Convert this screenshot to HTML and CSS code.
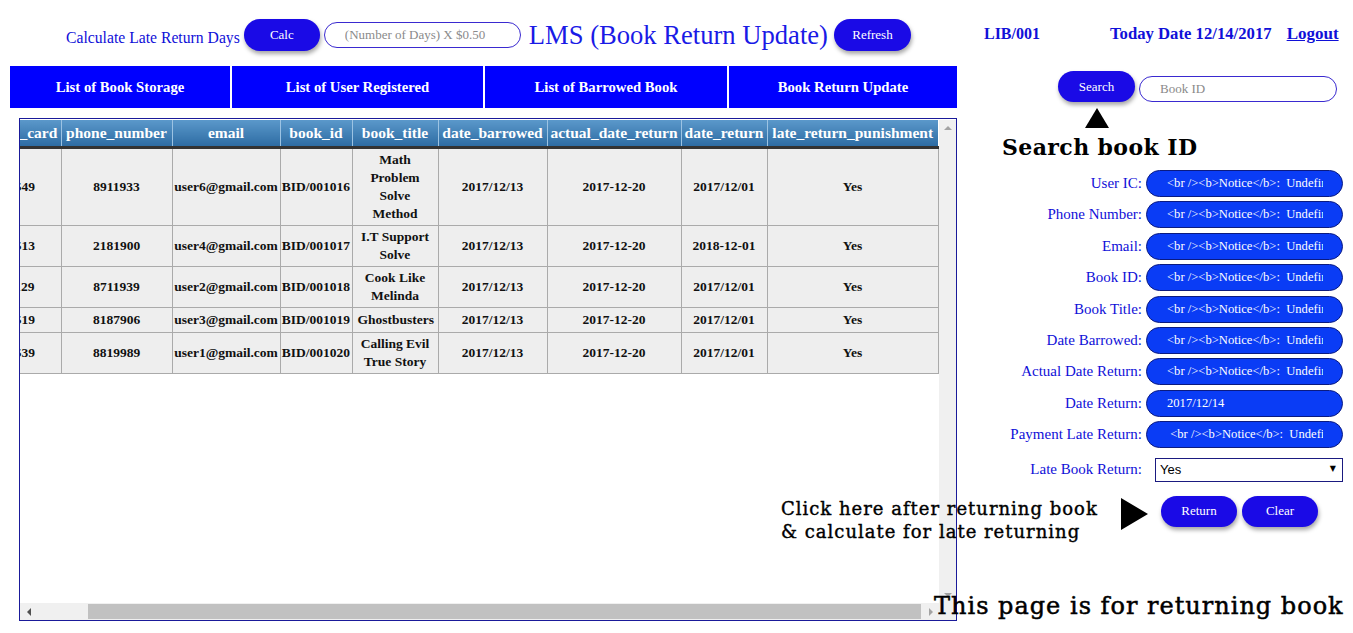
FILE: index.html
```html
<!DOCTYPE html>
<html>
<head>
<meta charset="utf-8">
<title>LMS (Book Return Update)</title>
<link rel="stylesheet" href="styles.css">
</head>
<body>
<header class="topbar">
  <span class="calc-label">Calculate Late Return Days</span>
  <button class="btn btn-calc">Calc</button>
  <input class="calc-input" type="text" placeholder="(Number of Days) X $0.50">
  <h1 class="title">LMS (Book Return Update)</h1>
  <button class="btn btn-refresh">Refresh</button>
  <span class="lib">LIB/001</span>
  <span class="today">Today Date 12/14/2017</span>
  <a class="logout" href="#">Logout</a>
</header>

<div class="main">
  <div class="left">
    <nav class="nav">
      <a href="#">List of Book Storage</a>
      <a href="#">List of User Registered</a>
      <a href="#">List of Barrowed Book</a>
      <a href="#">Book Return Update</a>
    </nav>
    <div class="table-wrap">
      <div class="viewport" id="viewport">
        <table class="data">
          <colgroup>
            <col class="c-ic"><col class="c-phone"><col class="c-email"><col class="c-bid"><col class="c-title"><col class="c-db"><col class="c-adr"><col class="c-dr"><col class="c-late">
          </colgroup>
          <thead>
            <tr>
              <th>user_ic_card</th><th>phone_number</th><th>email</th><th>book_id</th><th>book_title</th><th>date_barrowed</th><th>actual_date_return</th><th>date_return</th><th>late_return_punishment</th>
            </tr>
          </thead>
          <tbody>
            <tr><td>121549</td><td>8911933</td><td>user6@gmail.com</td><td>BID/001016</td><td class="wrap">Math Problem Solve Method</td><td>2017/12/13</td><td>2017-12-20</td><td>2017/12/01</td><td>Yes</td></tr>
            <tr><td>121513</td><td>2181900</td><td>user4@gmail.com</td><td>BID/001017</td><td class="wrap">I.T Support Solve</td><td>2017/12/13</td><td>2017-12-20</td><td>2018-12-01</td><td>Yes</td></tr>
            <tr><td>121129</td><td>8711939</td><td>user2@gmail.com</td><td>BID/001018</td><td class="wrap">Cook Like Melinda</td><td>2017/12/13</td><td>2017-12-20</td><td>2017/12/01</td><td>Yes</td></tr>
            <tr><td>121519</td><td>8187906</td><td>user3@gmail.com</td><td>BID/001019</td><td class="wrap">Ghostbusters</td><td>2017/12/13</td><td>2017-12-20</td><td>2017/12/01</td><td>Yes</td></tr>
            <tr><td>121539</td><td>8819989</td><td>user1@gmail.com</td><td>BID/001020</td><td class="wrap">Calling Evil True Story</td><td>2017/12/13</td><td>2017-12-20</td><td>2017/12/01</td><td>Yes</td></tr>
          </tbody>
        </table>
      </div>
      <div class="vbar">
        <span class="arrow arrow-up"></span>
        <span class="arrow arrow-down"></span>
      </div>
      <div class="hbar">
        <span class="hbtn"><span class="arrow arrow-left"></span></span>
        <span class="htrack"><span class="hthumb"></span></span>
        <span class="hbtn"><span class="arrow arrow-right"></span></span>
      </div>
      <div class="corner"></div>
    </div>
  </div>

  <aside class="right">
    <div class="search-row">
      <button class="btn btn-search">Search</button>
      <input class="search-input" type="text" placeholder="Book ID">
    </div>
    <div class="tri-up"></div>
    <div class="search-note">Search book ID</div>

    <form class="form">
      <label>User IC:</label><input class="pill" type="text" value="&lt;br /&gt;&lt;b&gt;Notice&lt;/b&gt;:  Undefined index: ic_card">
      <label>Phone Number:</label><input class="pill" type="text" value="&lt;br /&gt;&lt;b&gt;Notice&lt;/b&gt;:  Undefined index: phone_number">
      <label>Email:</label><input class="pill" type="text" value="&lt;br /&gt;&lt;b&gt;Notice&lt;/b&gt;:  Undefined index: email">
      <label>Book ID:</label><input class="pill" type="text" value="&lt;br /&gt;&lt;b&gt;Notice&lt;/b&gt;:  Undefined index: book_id">
      <label>Book Title:</label><input class="pill" type="text" value="&lt;br /&gt;&lt;b&gt;Notice&lt;/b&gt;:  Undefined index: book_title">
      <label>Date Barrowed:</label><input class="pill" type="text" value="&lt;br /&gt;&lt;b&gt;Notice&lt;/b&gt;:  Undefined index: date_barrowed">
      <label>Actual Date Return:</label><input class="pill" type="text" value="&lt;br /&gt;&lt;b&gt;Notice&lt;/b&gt;:  Undefined index: actual_date_return">
      <label>Date Return:</label><input class="pill" type="text" value="2017/12/14">
      <label>Payment Late Return:</label><input class="pill" type="text" value=" &lt;br /&gt;&lt;b&gt;Notice&lt;/b&gt;:  Undefined variable">
      <label class="sel-label">Late Book Return:</label>
      <div class="select-box">
        <select><option>Yes</option><option>No</option></select>
      </div>
    </form>

    <div class="action-row">
      <button class="btn btn-return">Return</button>
      <button class="btn btn-clear">Clear</button>
    </div>
  </aside>
</div>

<div class="note-click">Click here after returning book<br>&amp; calculate for late returning</div>
<div class="tri-right"></div>
<div class="note-page">This page is for returning book</div>

<script src="script.js"></script>
</body>
</html>
```

FILE: styles.css
```css
* { box-sizing: border-box; }

body {
  margin: 0;
  width: 1353px;
  height: 633px;
  overflow: hidden;
  position: relative;
  font-family: "Liberation Serif", "Times New Roman", serif;
  background: #ffffff;
  color: #1010d8;
}

/* ---------- top bar ---------- */
.topbar {
  display: flex;
  align-items: center;
  height: 32px;
  margin-top: 19px;
  padding-left: 66px;
}
.calc-label {
  font-size: 15.7px;
  color: #1010d8;
  padding-top: 5px;
}
.btn {
  width: 76px;
  height: 32px;
  border: none;
  border-radius: 16px;
  background: #1a0ae6;
  color: #ffffff;
  font-family: "Liberation Serif", serif;
  font-size: 13px;
  box-shadow: 1px 3px 4px rgba(0, 0, 0, 0.35);
  padding: 0;
}
.btn-calc { margin-left: 4px; }
.calc-input {
  margin-left: 4px;
  width: 197px;
  height: 26px;
  border: 1px solid #3a2ad0;
  border-radius: 13px;
  padding-left: 20px;
  font-family: "Liberation Serif", serif;
  font-size: 13px;
  outline: none;
}
.calc-input::placeholder, .search-input::placeholder { color: #8a8a8a; }
.title {
  margin: 0 0 0 8px;
  font-size: 26.6px;
  font-weight: normal;
  color: #1a1ae6;
  line-height: 32px;
}
.btn-refresh { margin-left: 6px; width: 77px; }
.lib, .today, .logout {
  font-weight: bold;
  color: #1010d8;
  padding-bottom: 3px;
}
.lib { margin-left: 73px; font-size: 16px; }
.today { margin-left: 70px; font-size: 16.7px; }
.logout { margin-left: 15px; font-size: 17px; text-decoration: underline; }

/* ---------- main layout ---------- */
.main {
  display: grid;
  grid-template-columns: 947px 1fr;
  margin-top: 15px;
  margin-left: 10px;
}

.nav {
  display: grid;
  grid-template-columns: 220px 251px 242px 228px;
  column-gap: 2px;
  height: 42px;
}
.nav a {
  display: flex;
  align-items: center;
  justify-content: center;
  background: #0000ff;
  color: #ffffff;
  font-size: 14.7px;
  font-weight: bold;
  text-decoration: none;
}

/* ---------- table ---------- */
.table-wrap {
  margin-top: 10px;
  margin-left: 9px;
  width: 938px;
  height: 503px;
  border: 1px solid #1a1a9a;
  padding-top: 1px;
  display: grid;
  grid-template-columns: 1fr 17px;
  grid-template-rows: 1fr 17px;
  overflow: hidden;
  background: #ffffff;
}
.viewport {
  overflow: hidden;
  min-width: 0;
}
.vbar {
  background: #f0f0f0;
  display: flex;
  flex-direction: column;
  justify-content: space-between;
  align-items: center;
  padding: 6px 0 6px;
}
.hbar {
  display: flex;
  background: #f0f0f0;
  height: 17px;
}
.hbtn {
  width: 17px;
  flex: none;
  display: flex;
  align-items: center;
  justify-content: center;
}
.htrack {
  flex: 1;
  display: flex;
  padding: 1px 0;
}
.hthumb {
  margin-left: 51px;
  width: 833px;
  background: #c1c1c1;
}
.corner { background: #f0f0f0; }

.arrow { width: 0; height: 0; display: block; }
.arrow-up {
  border-left: 4px solid transparent;
  border-right: 4px solid transparent;
  border-bottom: 4px solid #a3a3a3;
}
.arrow-down {
  border-left: 4px solid transparent;
  border-right: 4px solid transparent;
  border-top: 4px solid #a3a3a3;
}
.arrow-left {
  border-top: 4px solid transparent;
  border-bottom: 4px solid transparent;
  border-right: 4px solid #505050;
}
.arrow-right {
  border-top: 4px solid transparent;
  border-bottom: 4px solid transparent;
  border-left: 4px solid #a3a3a3;
}

.data {
  table-layout: fixed;
  width: 969px;
  border-collapse: collapse;
}
.c-ic { width: 92px; }
.c-phone { width: 111px; }
.c-email { width: 108px; }
.c-bid { width: 72px; }
.c-title { width: 86px; }
.c-db { width: 109px; }
.c-adr { width: 134px; }
.c-dr { width: 86px; }
.c-late { width: 171px; }

.data th {
  height: 27px;
  padding: 0;
  background: linear-gradient(#5b98ca, #2d6ca3);
  color: #ffffff;
  font-size: 15.5px;
  font-weight: bold;
  white-space: nowrap;
  text-align: center;
  border-left: 1px solid #9cc3e3;
  border-bottom: 3px solid #333333;
}
.data th:first-child { border-left: none; }
.data td {
  background: #eeeeee;
  border: 1px solid #aaaaaa;
  padding: 3px 1px;
  color: #111111;
  font-size: 13.5px;
  font-weight: bold;
  line-height: 18px;
  text-align: center;
  white-space: nowrap;
}
.data td:first-child { border-left: none; }
.data td.wrap {
  white-space: normal;
  padding: 2px 5px;
}

/* ---------- right panel ---------- */
.right {
  padding-left: 3px;
}
.search-row {
  display: flex;
  align-items: flex-end;
  margin-top: 5px;
  margin-left: 98px;
}
.btn-search { width: 77px; height: 31px; }
.search-input {
  margin-left: 4px;
  width: 198px;
  height: 26px;
  border: 1px solid #3a2ad0;
  border-radius: 13px;
  padding-left: 20px;
  font-family: "Liberation Serif", serif;
  font-size: 13px;
  outline: none;
}
.tri-up {
  width: 0;
  height: 0;
  margin-top: 6px;
  margin-left: 125px;
  border-left: 12.5px solid transparent;
  border-right: 12.5px solid transparent;
  border-bottom: 20px solid #000000;
}
.search-note {
  margin-left: 42px;
  margin-top: 2px;
  font-family: "DejaVu Serif", serif;
  font-weight: bold;
  font-size: 22px;
  line-height: 34px;
  color: #000000;
  letter-spacing: 0.4px;
}

.form {
  display: grid;
  grid-template-columns: 182px 197px;
  column-gap: 4px;
  row-gap: 4.4px;
  align-items: center;
  margin-top: 6px;
}
.form label {
  text-align: right;
  font-size: 15px;
  color: #1010d8;
}
.pill {
  width: 197px;
  height: 27px;
  border: 1px solid #0a1a80;
  border-radius: 14px;
  background: #0a3cf5;
  color: #ffffff;
  padding: 0 19px 0 20px;
  font-family: "Liberation Serif", serif;
  font-size: 12.6px;
  outline: none;
}
.form .sel-label { margin-top: 5px; }
.select-box {
  position: relative;
  margin-top: 5px;
  margin-left: 9px;
  width: 188px;
  height: 24px;
}
.select-box select {
  -webkit-appearance: none;
  appearance: none;
  width: 100%;
  height: 100%;
  border: 1px solid #1a1a80;
  border-radius: 0;
  background: #ffffff;
  padding-left: 4px;
  font-family: "Liberation Sans", Arial, sans-serif;
  font-size: 13px;
  color: #000000;
  outline: none;
}
.select-box::after {
  content: "\25BC";
  position: absolute;
  right: 7px;
  top: 6px;
  font-family: "DejaVu Sans", sans-serif;
  font-size: 8px;
  color: #000000;
  pointer-events: none;
}

.action-row {
  display: flex;
  margin-top: 14px;
  padding-left: 201px;
}
.btn-return { width: 76px; height: 31px; }
.btn-clear { width: 76px; height: 31px; margin-left: 5px; }

/* ---------- annotations (overlays) ---------- */
.note-click {
  position: absolute;
  left: 781px;
  top: 497px;
  font-family: "DejaVu Serif", serif;
  font-size: 18px;
  line-height: 23px;
  color: #000000;
  letter-spacing: 1px;
  -webkit-text-stroke: 0.4px #000000;
}
.tri-right {
  position: absolute;
  left: 1121px;
  top: 498px;
  width: 0;
  height: 0;
  border-top: 16.5px solid transparent;
  border-bottom: 16.5px solid transparent;
  border-left: 27px solid #000000;
}
.note-page {
  position: absolute;
  left: 934px;
  top: 590px;
  font-family: "DejaVu Serif", serif;
  font-size: 24px;
  line-height: 32px;
  color: #000000;
  letter-spacing: 1px;
  -webkit-text-stroke: 0.5px #000000;
}
```

FILE: script.js
```js
var vp = document.getElementById('viewport');
vp.scrollLeft = vp.scrollWidth;
```
